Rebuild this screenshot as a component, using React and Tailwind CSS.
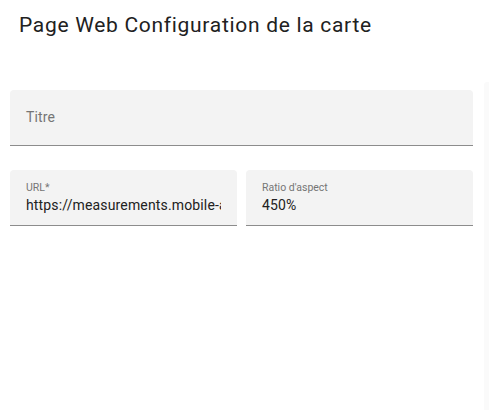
export default function App() {
  return (
    <div className="w-[489px] h-[410px] bg-white overflow-hidden font-['Roboto',sans-serif] flex flex-col">
      <div className="h-[82px] pl-[19px] pt-[11px]">
        <h1 className="text-[21px] leading-[28px] tracking-[0.7px] text-[#212121] font-normal">
          Page Web Configuration de la carte
        </h1>
      </div>
      <div className="flex flex-1">
        <div className="flex-1 pl-[10px] pr-[11px] pt-[8px] flex flex-col gap-[24px]">
          <div className="h-[56px] bg-[#f3f3f3] rounded-t-[4px] border-b border-[#8c8c8c] flex items-center px-[16px]">
            <span className="text-[14px] tracking-[0.15px] text-[#757575]">Titre</span>
          </div>
          <div className="flex gap-[9px]">
            <div className="w-[227px] h-[56px] bg-[#f3f3f3] rounded-t-[4px] border-b border-[#8c8c8c] px-[16px] pt-[11px]">
              <div className="text-[10.5px] leading-[14px] text-[#757575]">URL*</div>
              <div className="text-[14px] leading-[20px] tracking-[0.15px] text-[#212121] whitespace-nowrap overflow-hidden">
                https://measurements.mobile-app
              </div>
            </div>
            <div className="flex-1 h-[56px] bg-[#f3f3f3] rounded-t-[4px] border-b border-[#8c8c8c] px-[16px] pt-[11px]">
              <div className="text-[10.5px] leading-[14px] text-[#757575]">Ratio d'aspect</div>
              <div className="text-[14px] leading-[20px] tracking-[0.15px] text-[#212121]">450%</div>
            </div>
          </div>
        </div>
        <div className="w-[5px] bg-[#fafafa] rounded-tl-[3px]" />
      </div>
    </div>
  );
}
